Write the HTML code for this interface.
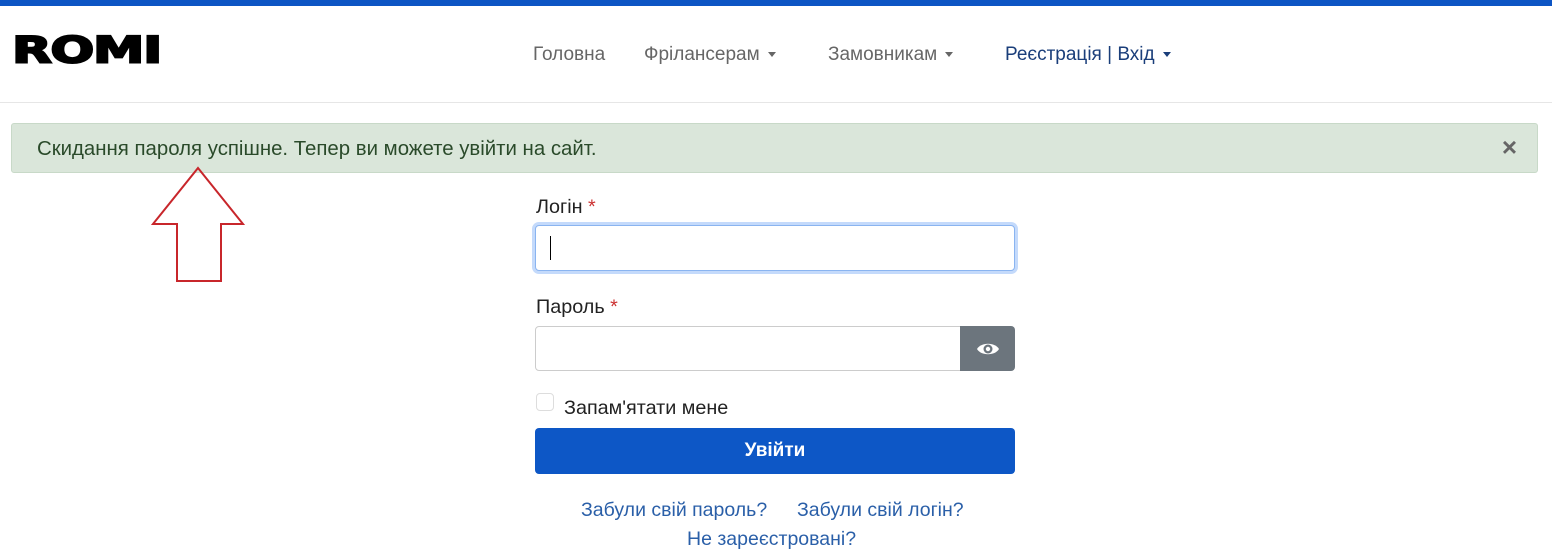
<!DOCTYPE html>
<html><head><meta charset="utf-8"><style>
body{margin:0;width:1552px;height:558px;background:#fff;font-family:"Liberation Sans",sans-serif;position:relative;overflow:hidden}
.a{position:absolute}
.top{left:0;top:0;width:1552px;height:6px;background:#0d55c4}
.hdr{left:0;top:102px;width:1552px;height:1px;background:#e6e6e6}
.logo{left:12px;top:31px;font-family:"DejaVu Sans",sans-serif;font-weight:900;font-size:38px;letter-spacing:-1px;color:#000;transform:scaleX(1.36) scaleY(0.95);transform-origin:left top;-webkit-text-stroke:2px #000;line-height:40px}
.nav{top:44px;font-size:19px;color:#666}
.car::after{content:"";display:inline-block;margin-left:8px;vertical-align:3px;border-left:4px solid transparent;border-right:4px solid transparent;border-top:5px solid currentColor}
.alert{left:11px;top:123px;width:1525px;height:48px;background:#dae6da;border:1px solid #c8d9c8;border-radius:3px}
.alert span{position:absolute;left:25px;top:14px;font-size:20.4px;color:#2a4a2a}
.x{right:20px;top:8px;font-size:26px;font-weight:bold;color:#666}
.lbl{font-size:19.8px;color:#222}
.lbl b{color:#c33;font-weight:normal}
.inp{background:#fff;border:1px solid #ccc;border-radius:4px;box-sizing:border-box}
.lnk{font-size:19.5px;color:#2a5fa8}
</style></head><body>
<div class="a top"></div>
<div class="a logo">ROMI</div>
<div class="a nav" style="left:533px">Головна</div>
<div class="a nav car" style="left:644px">Фрілансерам</div>
<div class="a nav car" style="left:828px">Замовникам</div>
<div class="a nav car" style="left:1005px;color:#1a3e7a">Реєстрація | Вхід</div>
<div class="a hdr"></div>
<div class="a alert"><span>Скидання пароля успішне. Тепер ви можете увійти на сайт.</span><div class="a x">×</div></div>
<svg class="a" style="left:0;top:0" width="300" height="300"><polygon points="198,168 243,224 221,224 221,281 177,281 177,224 153,224" fill="none" stroke="#c8262b" stroke-width="2"/></svg>
<div class="a lbl" style="left:536px;top:196px">Логін <b>*</b></div>
<div class="a inp" style="border:1px solid #8ab4f0;box-shadow:0 0 0 3px #c4dafb;left:535px;top:225px;width:480px;height:46px"></div>
<div class="a" style="left:550px;top:236px;width:1px;height:24px;background:#000"></div>
<div class="a lbl" style="left:536px;top:296px">Пароль <b>*</b></div>
<div class="a inp" style="left:535px;top:326px;width:430px;height:45px;border-radius:4px 0 0 4px"></div>
<div class="a" style="left:960px;top:326px;width:55px;height:45px;background:#6c757d;border-radius:0 4px 4px 0"></div>
<svg class="a" style="left:976px;top:340px" width="24" height="18"><path d="M1 9C5 2 19 2 23 9C19 16 5 16 1 9Z" fill="#fff"/><circle cx="12" cy="9" r="4.5" fill="#6c757d"/><circle cx="12" cy="9" r="2.2" fill="#fff"/></svg>
<div class="a inp" style="left:536px;top:393px;width:18px;height:18px;border-color:#ddd"></div>
<div class="a lbl" style="left:564px;top:397px">Запам'ятати мене</div>
<div class="a" style="left:535px;top:428px;width:480px;height:46px;background:#0d57c6;border-radius:4px;color:#fff;font-size:19px;font-weight:bold;text-align:center;line-height:46px">Увійти</div>
<div class="a lnk" style="left:581px;top:499px">Забули свій пароль?</div>
<div class="a lnk" style="left:797px;top:499px">Забули свій логін?</div>
<div class="a lnk" style="left:687px;top:528px">Не зареєстровані?</div>
</body></html>
